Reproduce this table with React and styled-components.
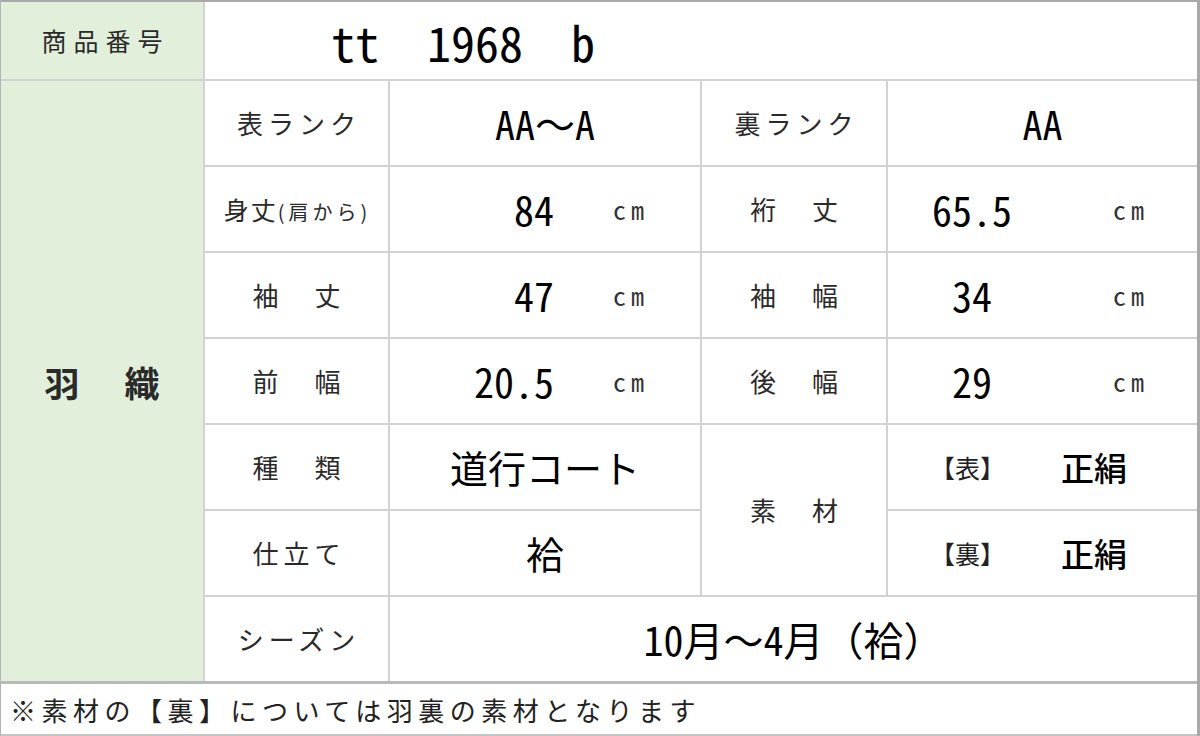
import React from "react";
import styled, { createGlobalStyle } from "styled-components";

const Global = createGlobalStyle`
  html, body { margin: 0; padding: 0; background: #fff; }
  body { font-family: "Noto Sans CJK JP", sans-serif; }
`;

const NUM = `"Noto Sans Mono CJK JP", "Noto Sans CJK JP", monospace`;
const CJK = `"Noto Sans CJK JP", sans-serif`;

const Page = styled.div`
  width: 1200px;
  height: 736px;
  box-sizing: border-box;
  border-left: 1px solid #b4b4b4;
  border-right: 3px solid #a9a9a9;
  display: flex;
  flex-direction: column;
  overflow: hidden;
`;

const Table = styled.div`
  display: grid;
  grid-template-columns: 202px 183px 310px 184px 1fr;
  grid-template-rows: 77px repeat(7, 84px);
  gap: 2px;
  background: #d3d3d3;
  border-top: 2px solid #a9a9a9;
`;

const Cell = styled.div`
  background: ${(p) => (p.$green ? "#e2efda" : "#ffffff")};
  grid-column: ${(p) => p.$col || "auto"};
  grid-row: ${(p) => p.$row || "auto"};
  display: flex;
  align-items: center;
  justify-content: ${(p) => p.$justify || "center"};
  padding-left: ${(p) => p.$padLeft || 0}px;
  min-width: 0;
`;

const Label = styled.span`
  font-family: ${CJK};
  font-size: ${(p) => p.$size || 26}px;
  letter-spacing: ${(p) => p.$spacing ?? 5}px;
  padding-left: ${(p) => p.$spacing ?? 5}px;
  color: #2a2a2a;
  font-weight: ${(p) => p.$weight || 400};
  white-space: nowrap;
  line-height: 1;
`;

const Small = styled.span`
  font-size: 20px;
  letter-spacing: 4px;
`;

const Code = styled.div`
  font-family: ${NUM};
  font-size: 48px;
  line-height: 1;
  white-space: pre;
  color: #000;
`;

const Value = styled.span`
  font-family: ${NUM};
  font-size: ${(p) => p.$size || 40}px;
  font-weight: ${(p) => p.$weight || 400};
  color: #000;
  line-height: 1;
  white-space: nowrap;
`;

const Measure = styled.div`
  display: flex;
  align-items: center;
  width: 100%;
`;

const Num = styled.span`
  width: ${(p) => p.$width}px;
  text-align: ${(p) => p.$align};
  font-family: ${NUM};
  font-size: 40px;
  line-height: 1;
  color: #000;
`;

const Unit = styled.span`
  margin-left: ${(p) => p.$gap}px;
  font-family: ${NUM};
  font-size: 26px;
  letter-spacing: 5px;
  color: #333;
  line-height: 1;
`;

const Material = styled.div`
  display: flex;
  align-items: center;
  gap: 56px;
  margin-left: 42px;
`;

const Bracket = styled.span`
  font-family: ${CJK};
  font-size: 25px;
  color: #222;
  line-height: 1;
`;

const Silk = styled.span`
  font-family: ${CJK};
  font-size: 33px;
  font-weight: 500;
  color: #000;
  line-height: 1;
`;

const Footer = styled.div`
  flex: 1;
  border-top: 3px solid #b9b9b9;
  border-bottom: 2px solid #c4c4c4;
  display: flex;
  align-items: center;
  padding-left: 9px;
  font-family: ${CJK};
  font-size: 26px;
  letter-spacing: 5.5px;
  color: #222;
`;

const measures = [
  { label: "身丈", small: "(肩から)", v1: "84", label2: "裄　丈", v2: "65.5" },
  { label: "袖　丈", v1: "47", label2: "袖　幅", v2: "34" },
  { label: "前　幅", v1: "20.5", label2: "後　幅", v2: "29" },
];

function MeasureCell({ value, side }) {
  const left = side === "left";
  return (
    <Cell>
      <Measure>
        <Num $width={left ? 164 : 168} $align={left ? "right" : "center"}>
          {value}
        </Num>
        <Unit $gap={left ? 59 : 57}>cm</Unit>
      </Measure>
    </Cell>
  );
}

export default function App() {
  return (
    <>
      <Global />
      <Page>
        <Table>
          <Cell $green>
            <Label $size={25} $spacing={7}>商品番号</Label>
          </Cell>
          <Cell $col="2 / 6" $justify="flex-start" $padLeft={126}>
            <Code>{"tt  1968  b"}</Code>
          </Cell>

          <Cell $green $row="2 / 9">
            <Label $size={35} $spacing={45} $weight={700}>羽織</Label>
          </Cell>

          <Cell>
            <Label>表ランク</Label>
          </Cell>
          <Cell>
            <Value>AA～A</Value>
          </Cell>
          <Cell>
            <Label>裏ランク</Label>
          </Cell>
          <Cell>
            <Value>AA</Value>
          </Cell>

          {measures.map((m) => (
            <React.Fragment key={m.label}>
              <Cell>
                {m.small ? (
                  <Label $size={25} $spacing={2}>
                    {m.label}
                    <Small>{m.small}</Small>
                  </Label>
                ) : (
                  <Label>{m.label}</Label>
                )}
              </Cell>
              <MeasureCell value={m.v1} side="left" />
              <Cell>
                <Label>{m.label2}</Label>
              </Cell>
              <MeasureCell value={m.v2} side="right" />
            </React.Fragment>
          ))}

          <Cell>
            <Label>種　類</Label>
          </Cell>
          <Cell>
            <Value $size={38} $weight={500}>道行コート</Value>
          </Cell>
          <Cell $row="6 / 8" $col="4">
            <Label>素　材</Label>
          </Cell>
          <Cell $justify="flex-start">
            <Material>
              <Bracket>【表】</Bracket>
              <Silk>正絹</Silk>
            </Material>
          </Cell>

          <Cell>
            <Label>仕立て</Label>
          </Cell>
          <Cell>
            <Value $size={38} $weight={500}>袷</Value>
          </Cell>
          <Cell $justify="flex-start">
            <Material>
              <Bracket>【裏】</Bracket>
              <Silk>正絹</Silk>
            </Material>
          </Cell>

          <Cell>
            <Label>シーズン</Label>
          </Cell>
          <Cell $col="3 / 6">
            <Value $size={40}>10月～4月（袷）</Value>
          </Cell>
        </Table>
        <Footer>※素材の【裏】については羽裏の素材となります</Footer>
      </Page>
    </>
  );
}
